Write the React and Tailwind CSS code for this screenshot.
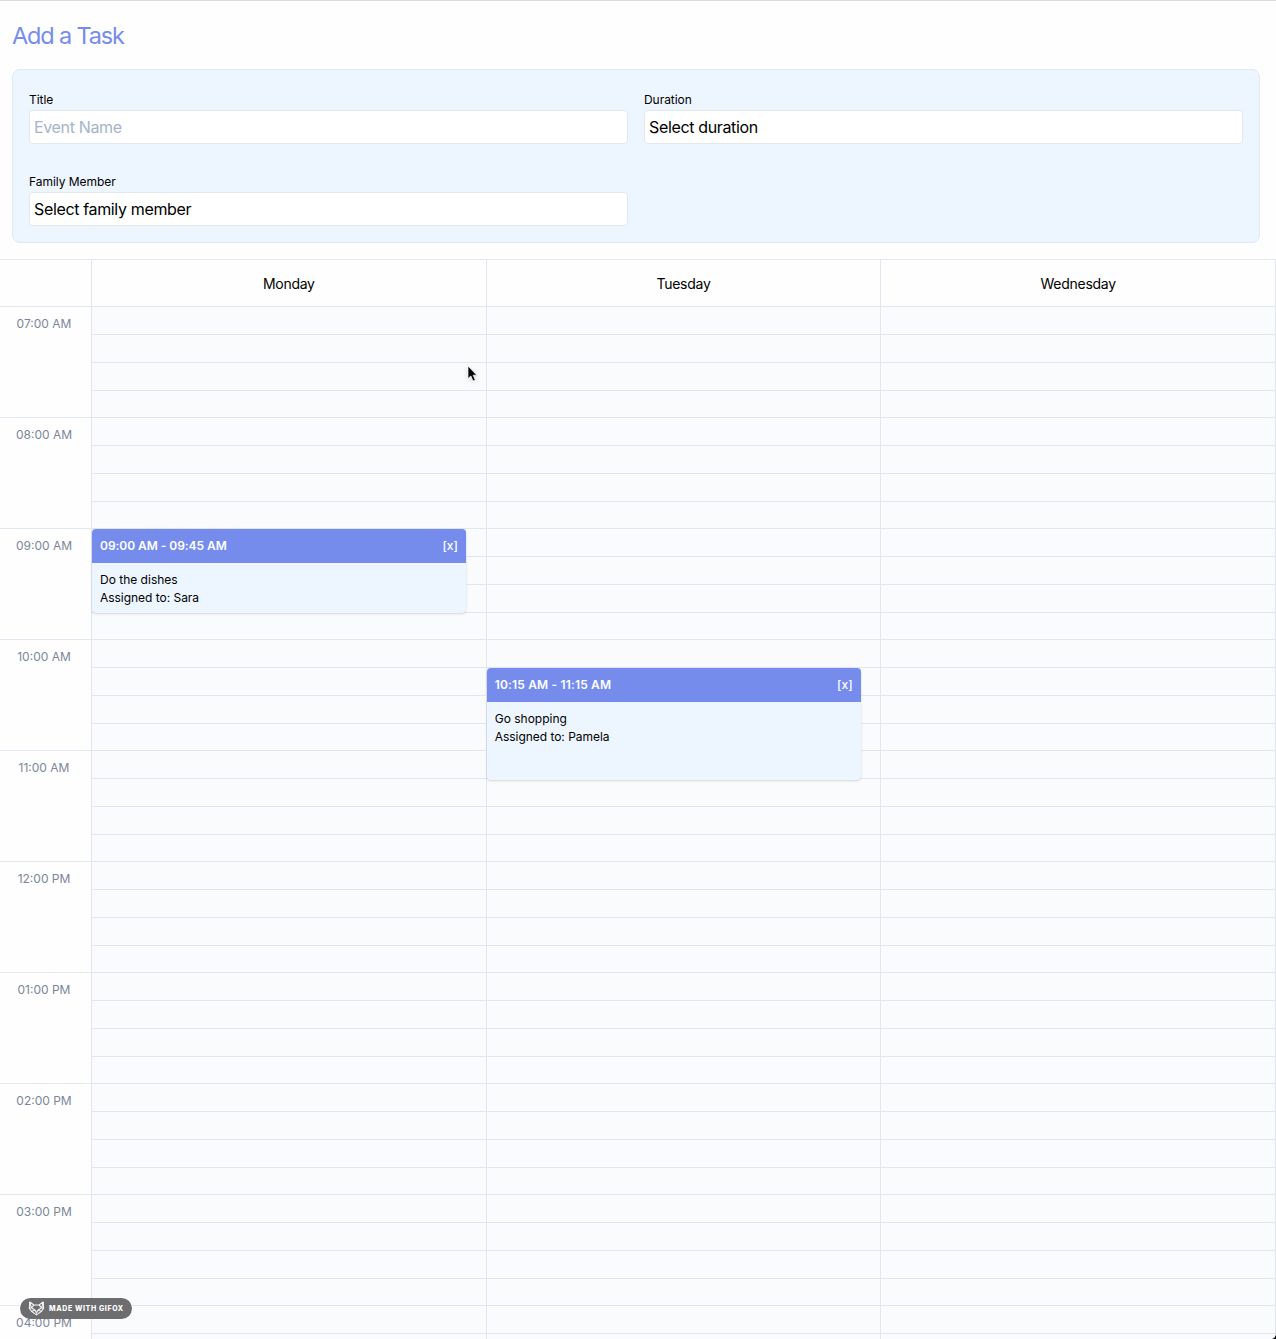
const HOURS = ["07:00 AM", "08:00 AM", "09:00 AM", "10:00 AM", "11:00 AM", "12:00 PM", "01:00 PM", "02:00 PM", "03:00 PM", "04:00 PM"];
const DAYS = ["Monday", "Tuesday", "Wednesday"];

function Field({ label, value, placeholder }) {
  return (
    <div className="flex flex-col">
      <label className="h-[18px] text-[12px] leading-[18px] tracking-[-0.04px]">{label}</label>
      <div className={`mt-[1px] flex h-[34px] items-center rounded-[4px] border border-[#e2e8f0] bg-white px-1 text-[16px] leading-6 tracking-[-0.35px] ${placeholder ? "text-[#a5b4c8]" : "text-black"}`}>
        {value}
      </div>
    </div>
  );
}

function Event({ time, title, who, className, timeClass }) {
  return (
    <div className={`absolute left-0 z-10 w-[95%] overflow-hidden rounded-[4px] bg-[#edf5ff] text-[12px] leading-[18px] shadow-[0_1px_3px_rgba(0,0,0,0.1),0_1px_2px_rgba(0,0,0,0.06)] ${className}`}>
      <div className="flex h-[34px] items-center justify-between bg-[#758cec] px-2 text-white">
        <span className={`font-semibold ${timeClass}`}>{time}</span>
        <span className="font-medium">[x]</span>
      </div>
      <div className="p-2">
        <div>{title}</div>
        <div className="tracking-[-0.03px]">{who}</div>
      </div>
    </div>
  );
}

function Slots() {
  return HOURS.map((h) => (
    <div key={h} className="flex h-[111px] flex-col">
      <div className="h-7 border-b border-[#e2e6f0]" />
      <div className="h-7 border-b border-[#e2e6f0]" />
      <div className="h-7 border-b border-[#e2e6f0]" />
      <div className="h-[27px] border-b border-[#e2e6f0]" />
    </div>
  ));
}

export default function App() {
  return (
    <div className="relative h-[1339px] w-[1276px] overflow-hidden border-t border-[#dcdcdc] bg-[#fefefe] font-['Inter','Liberation_Sans',sans-serif] text-black">
      <h1 className="ml-3 mt-[17px] h-9 text-[23.5px] leading-9 tracking-[-1.15px] text-[#758cec]">Add a Task</h1>
      <div className="ml-3 mt-[15px] grid h-[174px] w-[1248px] grid-cols-2 content-start gap-x-4 gap-y-[29px] rounded-lg border border-[#dfe8f4] bg-[#edf5ff] px-4 pt-[21px]">
        <Field label="Title" value="Event Name" placeholder />
        <Field label="Duration" value="Select duration" />
        <Field label="Family Member" value="Select family member" />
      </div>

      <div className="mt-4 flex h-12 border-y border-[#e2e6f0]">
        <div className="w-[92px] shrink-0 border-r border-[#e2e6f0]" />
        {DAYS.map((d) => (
          <div key={d} className="flex flex-1 items-center justify-center border-r border-[#e2e6f0] pt-[2px] text-[14px] leading-5 tracking-[-0.28px]">{d}</div>
        ))}
      </div>
      <div className="flex">
        <div className="w-[92px] shrink-0 border-r border-[#e2e6f0]">
          {HOURS.map((h) => (
            <div key={h} className="h-[111px] border-b border-[#e2e6f0] pr-[3px] pt-2 text-center text-[12px] leading-[18px] text-[#7b8699]">{h}</div>
          ))}
        </div>
        {DAYS.map((d) => (
          <div key={d} className="relative flex-1 border-r border-[#e2e6f0] bg-[#fafbfd]">
            <Slots />
            {d === "Monday" && <Event className="top-[222px] h-[84px]" timeClass="tracking-[-0.04px]" time="09:00 AM - 09:45 AM" title="Do the dishes" who="Assigned to: Sara" />}
            {d === "Tuesday" && <Event className="top-[361px] h-[112px]" timeClass="tracking-[0.17px]" time="10:15 AM - 11:15 AM" title="Go shopping" who="Assigned to: Pamela" />}
          </div>
        ))}
      </div>

      <div className="absolute left-5 top-[1297px] z-20 flex h-[21px] w-28 items-center rounded-full bg-[#6d6d6f] pl-2 text-white">
        <svg width="17" height="15" viewBox="0 0 17 15" fill="none" stroke="#f4f4f4" strokeWidth="1.1" strokeLinejoin="round">
          <path d="M1.8 1 L6 4 H11 L15.2 1 L15.6 7.5 L13.5 10.2 L8.5 13.9 L3.5 10.2 L1.4 7.5 Z" />
          <path d="M1.8 1 L3.3 6.8 L1.4 7.5 M15.2 1 L13.7 6.8 L15.6 7.5 M6 4 L3.3 6.8 L7.2 9.3 L8.5 12 L9.8 9.3 L13.7 6.8 L11 4 M7.2 9.3 L3.5 10.2 M9.8 9.3 L13.5 10.2" />
        </svg>
        <span className="ml-1 whitespace-nowrap text-[7px] font-extrabold leading-none tracking-[0.62px]">MADE WITH GIFOX</span>
      </div>

      <svg className="absolute left-[467px] top-[364px] z-20 drop-shadow-sm" width="12" height="18" viewBox="0 0 12 18">
        <path d="M1 1 V13.5 L3.9 11 L6 16 L8.3 15 L6.1 10.2 H9.8 Z" fill="#000" stroke="#fff" strokeWidth="0.7" />
      </svg>
      <svg className="absolute bottom-0 right-0 z-20" width="4" height="4" viewBox="0 0 4 4">
        <path d="M4 0 V4 H0 Q3 3 4 0 Z" />
      </svg>
    </div>
  );
}
